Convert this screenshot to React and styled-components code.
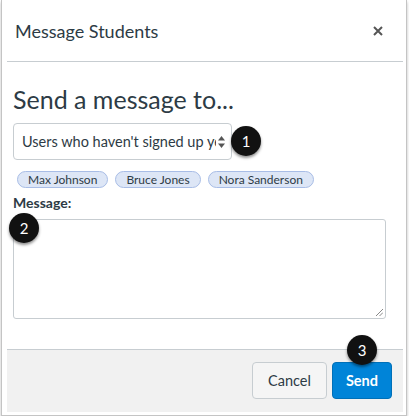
import styled, { createGlobalStyle } from 'styled-components'

const GlobalStyle = createGlobalStyle`
	html, body {
		margin: 0;
		padding: 0;
		background: #ffffff;
	}
	body {
		font-family: Lato, 'Open Sans', 'Liberation Sans', sans-serif;
		color: #2d3b45;
	}
`

const Frame = styled.div`
	position: relative;
	box-sizing: border-box;
	width: 406px;
	margin-left: 1px;
	padding: 0 3px 3px 5px;
	border: 1px solid #c4c4c4;
	border-top: none;
	box-shadow: 0 2px 3px rgba(0, 0, 0, 0.25);
	background: #fff;
`

const Header = styled.div`
	height: 61px;
	display: flex;
	align-items: center;
	justify-content: space-between;
	padding: 0 20px 0 8px;
	border-bottom: 1px solid #c7cdd1;
	h2 {
		margin: 0;
		font-size: 18px;
		font-weight: 400;
		color: #2d3b45;
	}
	svg {
		display: block;
	}
`

const Body = styled.div`
	padding: 21px 17px 30px 6px;
	h1 {
		margin: 0;
		font-size: 25px;
		font-weight: 400;
		line-height: 32px;
		color: #2d3b45;
	}
`

const SelectRow = styled.div`
	position: relative;
	margin-top: 8px;
	width: 219px;
`

const Select = styled.div`
	box-sizing: border-box;
	height: 37px;
	width: 219px;
	border: 1px solid #c7cdd1;
	border-radius: 4px;
	display: flex;
	align-items: center;
	padding: 0 6px 0 8px;
	font-size: 14.5px;
	color: #2d3b45;
	span {
		flex: 1;
		overflow: hidden;
		white-space: nowrap;
	}
	svg {
		flex: none;
		margin-left: 2px;
	}
`

const Pills = styled.div`
	display: flex;
	gap: 7px;
	margin: 11px 0 0 4px;
`

const Pill = styled.span`
	box-sizing: border-box;
	height: 17px;
	padding: 0 10px;
	display: inline-flex;
	align-items: center;
	border-radius: 9px;
	background: #dde6f6;
	border: 1px solid #a8bde6;
	font-size: 12px;
	color: #2d3b45;
`

const Label = styled.div`
	margin-top: 6px;
	font-size: 14px;
	font-weight: 700;
	color: #2d3b45;
`

const TextArea = styled.div`
	position: relative;
	box-sizing: border-box;
	margin-top: 8px;
	height: 100px;
	border: 1px solid #c7cdd1;
	border-radius: 3px;
	svg {
		position: absolute;
		right: 2px;
		bottom: 2px;
	}
`

const Footer = styled.div`
	position: relative;
	height: 63px;
	box-sizing: border-box;
	background: #f1f1f1;
	border-top: 1px solid #c7cdd1;
	display: flex;
	justify-content: flex-end;
	align-items: flex-start;
	gap: 5px;
	padding: 12px 11px 0 0;
`

const Button = styled.button`
	box-sizing: border-box;
	height: 37px;
	padding: 0 ${(p) => (p.$primary ? '13px' : '15px')};
	border-radius: 4px;
	font-family: Lato, 'Open Sans', sans-serif;
	font-size: 14.5px;
	font-weight: ${(p) => (p.$primary ? 700 : 400)};
	color: ${(p) => (p.$primary ? '#fff' : '#2d3b45')};
	background: ${(p) => (p.$primary ? '#0084d8' : '#f5f5f5')};
	border: 1px solid ${(p) => (p.$primary ? '#0070b8' : '#c7cdd1')};
`

const Badge = styled.span`
	position: absolute;
	left: ${(p) => p.$x}px;
	top: ${(p) => p.$y}px;
	width: 30px;
	height: 30px;
	border-radius: 50%;
	background: #111;
	color: #fff;
	font-size: 15px;
	display: flex;
	align-items: center;
	justify-content: center;
	box-shadow: 0 2px 3px rgba(0, 0, 0, 0.45);
	z-index: 2;
`

export default function App() {
	return (
		<>
			<GlobalStyle />
			<Frame>
				<Header>
					<h2>Message Students</h2>
					<svg width='10' height='10' viewBox='0 0 10 10'>
						<path d='M1 1 L9 9 M9 1 L1 9' stroke='#555' strokeWidth='2' />
					</svg>
				</Header>
				<Body>
					<h1>Send a message to...</h1>
					<SelectRow>
						<Select>
							<span>Users who haven't signed up yet</span>
							<svg width='7' height='12' viewBox='0 0 7 12'>
								<path d='M3.5 0 L7 4.5 H0 Z' fill='#555' />
								<path d='M3.5 12 L7 7.5 H0 Z' fill='#555' />
							</svg>
						</Select>
					</SelectRow>
					<Pills>
						<Pill>Max Johnson</Pill>
						<Pill>Bruce Jones</Pill>
						<Pill>Nora Sanderson</Pill>
					</Pills>
					<Label>Message:</Label>
					<TextArea>
						<svg width='7' height='7' viewBox='0 0 7 7'>
							<path d='M7 0 L0 7 M7 3.5 L3.5 7' stroke='#888' strokeWidth='1' />
						</svg>
					</TextArea>
				</Body>
				<Footer>
					<Button>Cancel</Button>
					<Button $primary>Send</Button>
				</Footer>
				<Badge $x={229} $y={126}>1</Badge>
				<Badge $x={7} $y={213}>2</Badge>
				<Badge $x={345} $y={335}>3</Badge>
			</Frame>
		</>
	)
}
